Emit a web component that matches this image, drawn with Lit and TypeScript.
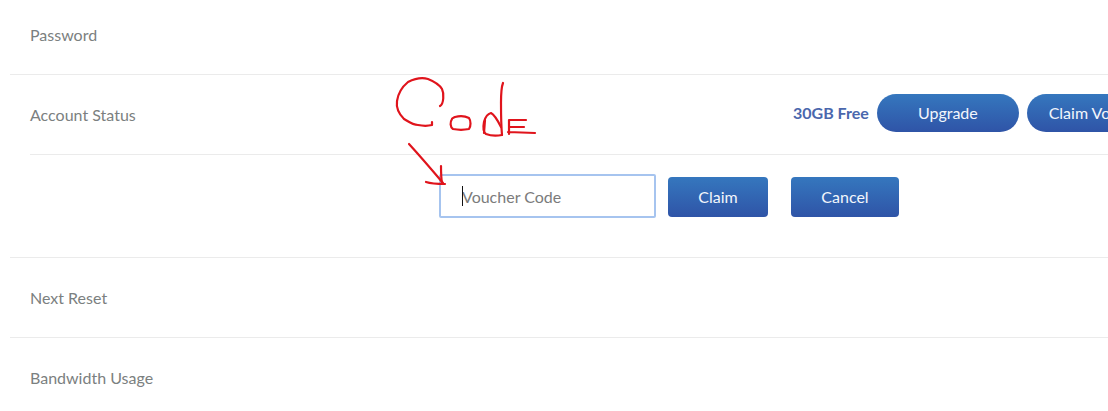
import { LitElement, html, css } from "lit";
import { customElement } from "lit/decorators.js";

@customElement("app-root")
export class AppRoot extends LitElement {
  static styles = css`
    :host {
      display: block;
      position: relative;
      width: 1108px;
      height: 411px;
      overflow: hidden;
      background: #fff;
      font-family: Lato, sans-serif;
      font-size: 16px;
      color: #7b8080;
    }
    .row {
      display: flex;
      align-items: center;
      margin-left: 10px;
      padding-left: 20px;
      box-sizing: border-box;
      border-bottom: 1px solid #ebebeb;
      white-space: nowrap;
    }
    .first { height: 75px; padding-bottom: 5px; }
    .status { height: 80px; margin-left: 30px; padding-left: 0; padding-bottom: 1px; }
    .voucher { height: 103px; padding-left: 429px; padding-bottom: 20px; gap: 12px; }
    .plain { height: 80px; padding-bottom: 1px; }
    .last { border-bottom: none; }
    .label { width: 763px; flex: none; }
    .plan { font-weight: 700; font-size: 16px; color: #4a67ad; margin-right: 8px; margin-top: -4px; }
    .btn {
      flex: none;
      box-sizing: border-box;
      border: none;
      padding: 0 0 2px;
      font: inherit;
      color: #f2f6fc;
      background: linear-gradient(#3577be, #2f54a7);
      text-align: center;
    }
    .pill { height: 38px; border-radius: 19px; margin-top: -2px; }
    .upgrade { width: 142px; margin-right: 8px; }
    .claimv { width: 145px; }
    .square { height: 40px; border-radius: 4px; margin-top: 2px; }
    .claim { width: 100px; margin-right: 11px; }
    .cancel { width: 108px; }
    .field { position: relative; flex: none; display: flex; }
    input {
      width: 217px;
      height: 44px;
      box-sizing: border-box;
      border: 2px solid #a6c4ef;
      border-radius: 2px;
      padding: 0 0 0 21px;
      font: inherit;
      outline: none;
      background: #fff;
    }
    input::placeholder { color: #7b7b7b; opacity: 1; }
    .caret {
      position: absolute;
      left: 23px;
      top: 12px;
      width: 1px;
      height: 20px;
      background: #111;
    }
    .ink {
      position: absolute;
      left: 0;
      top: 0;
      pointer-events: none;
    }
    .ink path {
      fill: none;
      stroke: #e0141c;
      stroke-width: 2.2;
      stroke-linecap: round;
      stroke-linejoin: round;
    }
  `;

  render() {
    return html`
      <div class="row first"><span>Password</span></div>
      <div class="row status">
        <span class="label">Account Status</span>
        <span class="plan">30GB Free</span>
        <button class="btn pill upgrade">Upgrade</button>
        <button class="btn pill claimv">Claim Voucher</button>
      </div>
      <div class="row voucher">
        <div class="field">
          <input placeholder="Voucher Code" />
          <span class="caret"></span>
        </div>
        <button class="btn square claim">Claim</button>
        <button class="btn square cancel">Cancel</button>
      </div>
      <div class="row plain"><span>Next Reset</span></div>
      <div class="row plain last"><span>Bandwidth Usage</span></div>
      <svg class="ink" width="1108" height="411" viewBox="0 0 1108 411">
        <path d="M440 106C444 104 444 93 442 89C439 84 433 81 428 79C421 77 414 79 408 82C402 87 398 94 397 101C396 108 399 114 404 119C409 122 413 125 418 125C423 126 428 126 432 125L432 122" />
        <path d="M452 119C450 122 450 127 453 129C458 130 464 130 469 129C471 126 471 121 469 118C465 116 459 116 455 117C453 118 452 118 452 119Z" />
        <path d="M503 83C501 88 501 95 501 103C501 113 501 124 502 135" />
        <path d="M501 127C498 121 495 115 491 113C487 114 485 118 484 122C483 127 483 132 486 134C491 136 497 136 502 135" />
        <path d="M485 120L484 133" />
        <path d="M509 134L509 120L526 120M510 127L524 127M508 132L535 133" />
        <path d="M409 144C420 156 432 170 443 183" />
        <path d="M441 166C441 172 441 177 442 183" />
        <path d="M426 182C432 184 438 184 445 184" />
      </svg>
    `;
  }
}
